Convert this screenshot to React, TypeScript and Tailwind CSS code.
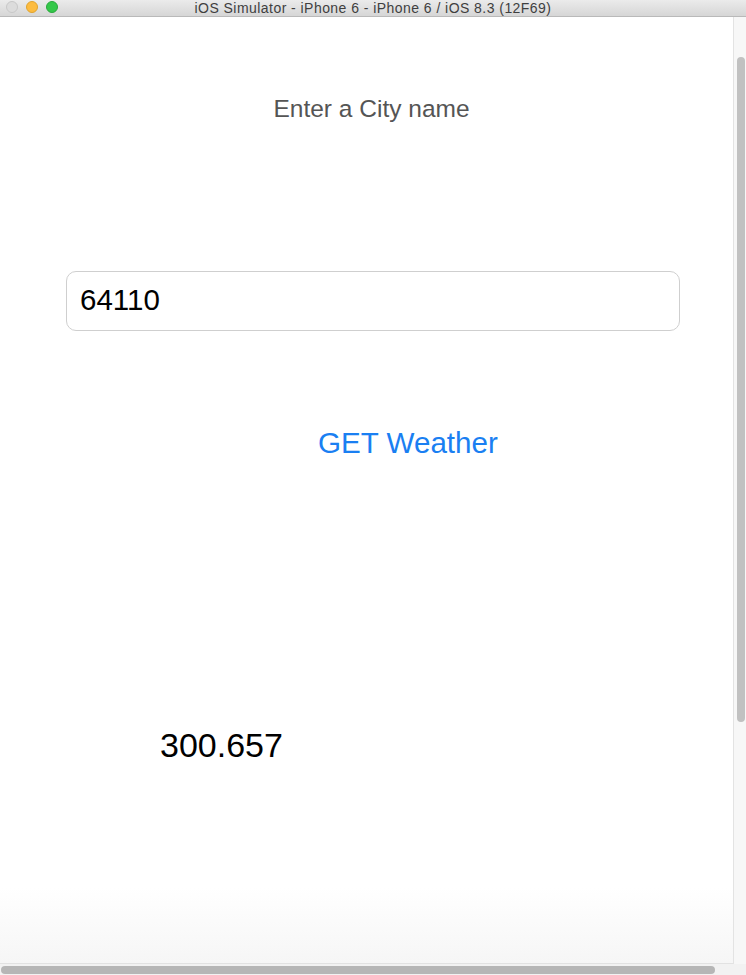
export default function App() {
  return (
    <div
      className="flex h-[975px] w-[746px] flex-col overflow-hidden bg-white"
      style={{ fontFamily: '"Liberation Sans", Arial, sans-serif' }}
    >
      {/* Simulator title bar */}
      <div className="relative flex h-[17px] shrink-0 items-center justify-center border-b border-[#b9b9b9] bg-gradient-to-b from-[#ebebeb] to-[#d6d6d6]">
        <div className="absolute left-[6px] top-[1px] flex gap-[8px]">
          <span className="size-[12px] rounded-full border border-[#c8c8c8] bg-[#dcdcdc]" />
          <span className="size-[12px] rounded-full border border-[#e0a42e] bg-[#fdbc40]" />
          <span className="size-[12px] rounded-full border border-[#29a83c] bg-[#34c84a]" />
        </div>
        <span className="text-[14px] leading-none tracking-[0.45px] text-[#3f3f3f]">iOS Simulator - iPhone 6 - iPhone 6 / iOS 8.3 (12F69)</span>
      </div>

      <div className="flex flex-1">
        {/* Screen */}
        <div className="flex w-[733px] flex-col border-b border-[#e2e2e2] bg-gradient-to-b from-white from-[92%] to-[#f6f6f6]">
          <p className="mt-[78px] pl-[10px] text-center text-[24.5px] leading-[28px] text-[#555555]">Enter a City name</p>

          <div className="ml-[66px] mt-[148px] flex h-[60px] w-[614px] items-center rounded-[10px] border border-[#cfcfcf] px-[13px]">
            <span className="-mt-[2px] text-[29.5px] text-black">64110</span>
          </div>

          <button className="ml-[318px] mt-[94px] self-start text-[29.6px] leading-[36px] text-[#1a7ff2]">GET Weather</button>

          <p className="ml-[160px] mt-[266px] text-[34px] leading-[36px] text-black">300.657</p>
        </div>

        {/* Vertical scrollbar */}
        <div className="flex w-[13px] border-l border-[#e3e3e3] bg-[#f7f7f7] pl-[3px] pt-[40px]">
          <div className="h-[665px] w-[8px] rounded-full bg-[#c1c1c1]" />
        </div>
      </div>

      {/* Horizontal scrollbar */}
      <div className="flex h-[11px] shrink-0 items-center bg-[#f2f2f2] pl-[1px]">
        <div className="h-[8px] w-[714px] rounded-full bg-[#b6b6b6]" />
      </div>
    </div>
  );
}
